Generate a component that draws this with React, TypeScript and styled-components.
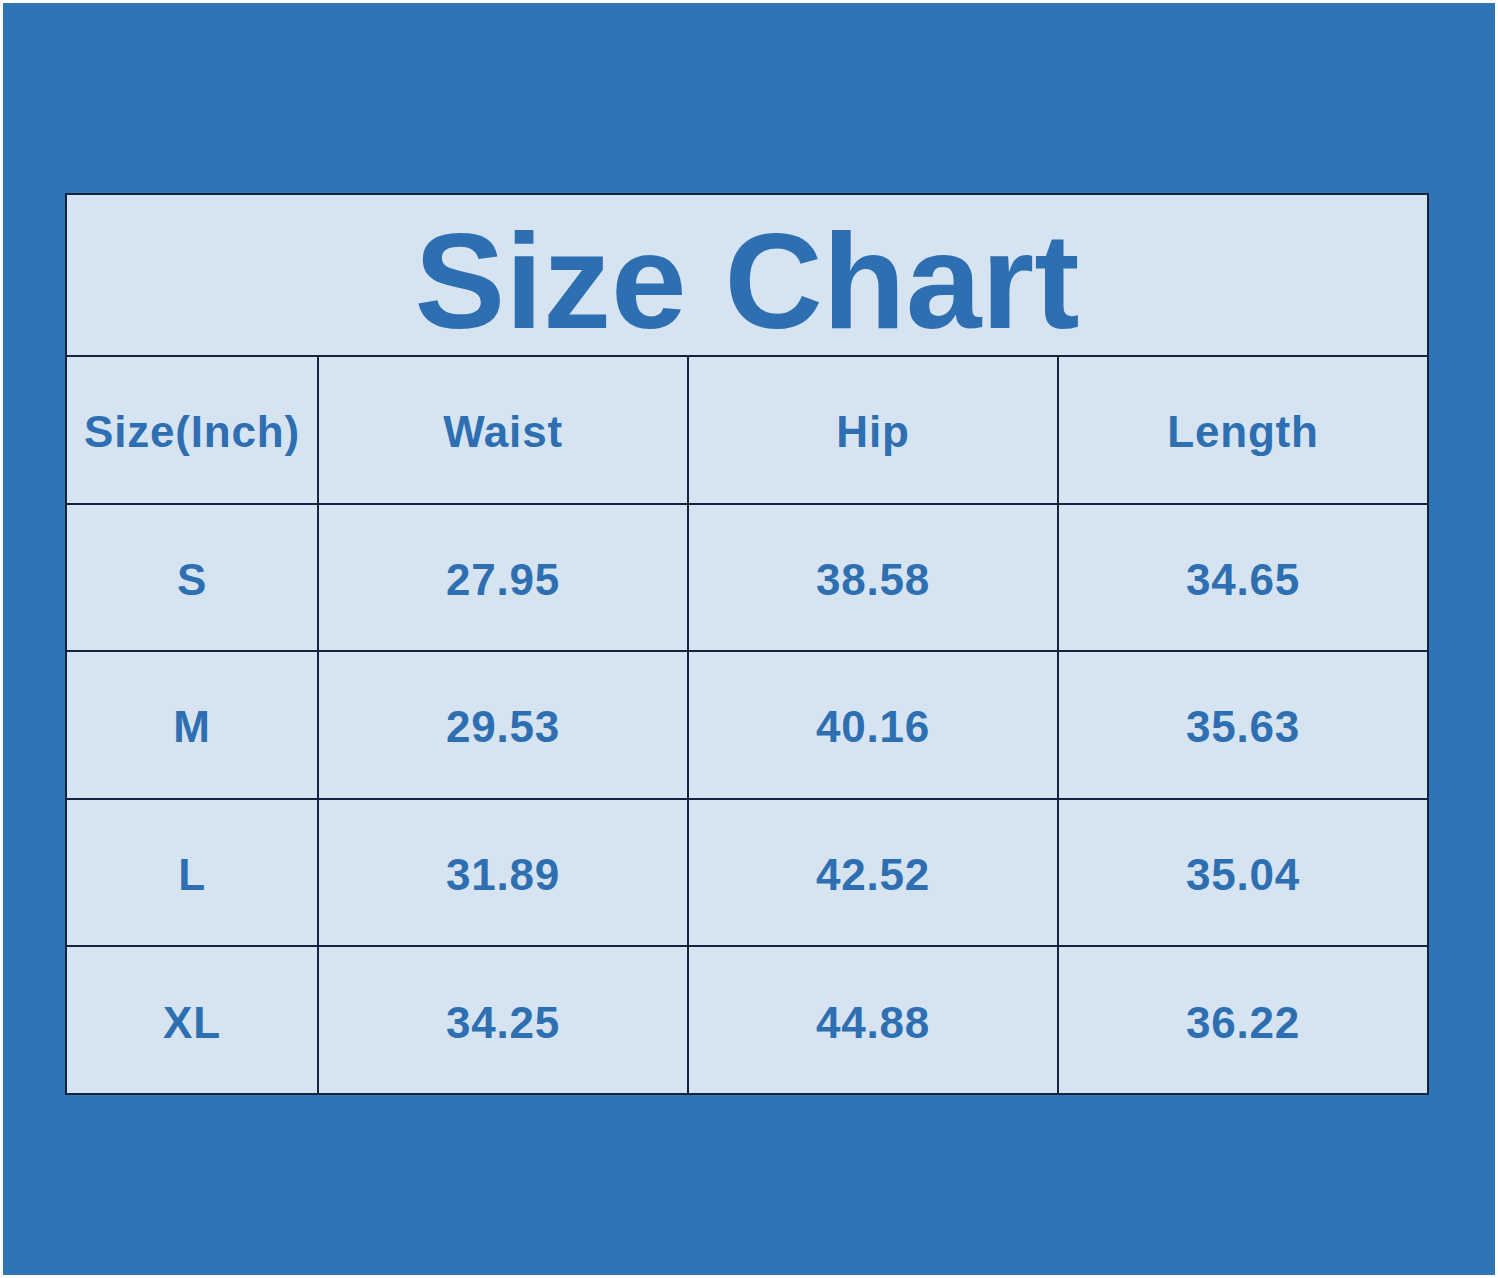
import React from "react";
import styled, { createGlobalStyle } from "styled-components";

const GlobalStyle = createGlobalStyle`
    html, body {
        margin: 0;
        padding: 0;
        background: #ffffff;
    }
    body {
        font-family: "Liberation Sans", Arial, sans-serif;
    }
`;

const headers = ["Size(Inch)", "Waist", "Hip", "Length"];

const rows = [
    ["S", "27.95", "38.58", "34.65"],
    ["M", "29.53", "40.16", "35.63"],
    ["L", "31.89", "42.52", "35.04"],
    ["XL", "34.25", "44.88", "36.22"],
];

export default function App() {
    return (
        <>
            <GlobalStyle />
            <Frame>
                <Panel>
                    <Chart>
                        <Title>Size Chart</Title>
                        {headers.map((h) => (
                            <Cell key={h}>{h}</Cell>
                        ))}
                        {rows.map((row) =>
                            row.map((value, i) => (
                                <Cell key={row[0] + i}>{value}</Cell>
                            ))
                        )}
                    </Chart>
                </Panel>
            </Frame>
        </>
    );
}

const Frame = styled.div`
    padding: 3px;
    width: 1498px;
    height: 1278px;
    box-sizing: border-box;
`;

const Panel = styled.div`
    height: 100%;
    background: #2f74b5;
    padding: 190px 66px 0 62px;
    box-sizing: border-box;
`;

const Chart = styled.div`
    display: grid;
    grid-template-columns: 250px repeat(3, 1fr);
    grid-template-rows: 160px repeat(5, 145.6px);
    gap: 2px;
    border: 2px solid #14233d;
    background: #14233d;
`;

const Title = styled.div`
    grid-column: 1 / -1;
    display: flex;
    align-items: center;
    justify-content: center;
    background: #d6e4f2;
    color: #2e6fb2;
    font-size: 136px;
    font-weight: 700;
    padding-top: 12px;
    box-sizing: border-box;
`;

const Cell = styled.div`
    display: flex;
    align-items: center;
    justify-content: center;
    background: #d6e4f2;
    color: #2e6fb2;
    font-size: 44px;
    font-weight: 700;
    letter-spacing: 0.8px;
    padding-top: 5px;
    box-sizing: border-box;
`;
